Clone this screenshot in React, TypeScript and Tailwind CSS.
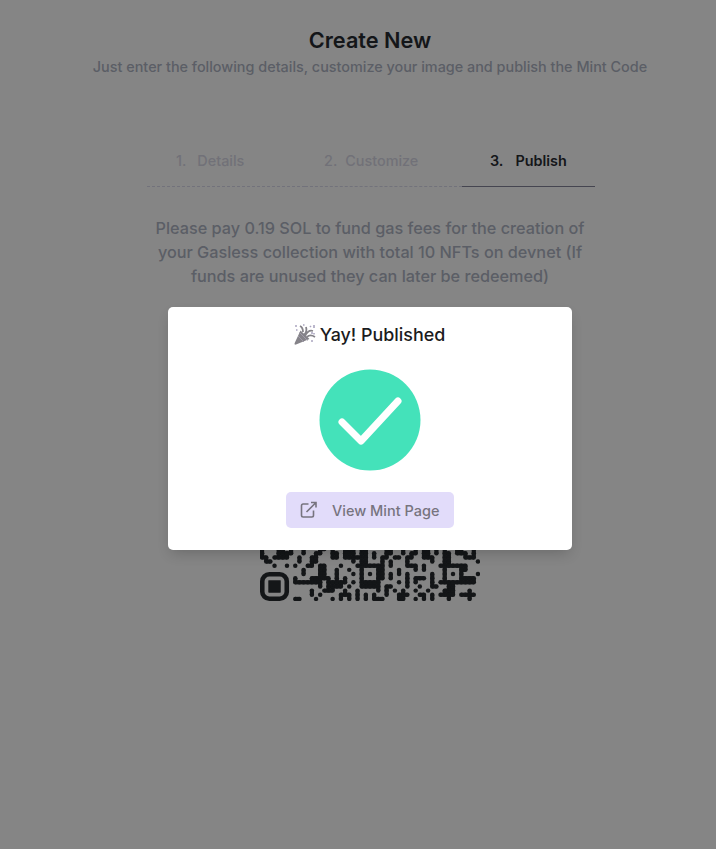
import React from "react";

// Lower rows of the QR symbol, top to bottom; each lists its dark columns.
const rows: number[][] = [
  [0, 4, 5, 7, 10, 14, 15, 17, 20, 21, 22, 24, 25, 30, 31, 34, 37, 39, 40, 42, 44, 47, 48, 51],
  [0, 4, 5, 6, 7, 10, 13, 14, 17, 18, 20, 21, 22, 24, 25, 27, 30, 31, 34, 36, 37, 39, 40, 42, 44, 45, 47, 48, 49, 51],
  [0, 1, 3, 4, 5, 6, 9, 12, 13, 17, 18, 20, 21, 22, 23, 24, 25, 27, 29, 30, 32, 33, 35, 36, 39, 40, 41, 44, 45, 49, 50, 51],
  [1, 2, 9, 12, 13, 22, 24, 25, 29, 31, 35, 41, 44, 45, 52],
  [3, 6, 8, 11, 12, 14, 15, 19, 23, 24, 25, 26, 27, 28, 29, 31, 35, 36, 37, 39, 43, 44, 45, 46, 47, 48, 49],
  [10, 14, 15, 18, 21, 24, 28, 29, 33, 37, 39, 44, 48, 49],
  [10, 14, 15, 18, 22, 24, 26, 28, 29, 31, 33, 35, 41, 44, 46, 48, 52],
  [8, 12, 13, 14, 15, 16, 18, 20, 24, 28, 29, 31, 35, 37, 38, 39, 41, 44, 48, 49, 50, 51],
  [8, 9, 10, 11, 12, 13, 14, 16, 17, 18, 19, 20, 22, 24, 25, 26, 27, 28, 33, 35, 37, 41, 43, 44, 45, 46, 47, 48, 49, 50, 51],
  [14, 16, 17, 18, 19, 21, 24, 25, 26, 27, 28, 30, 31, 35, 38, 41, 42, 45, 46],
  [12, 15, 16, 17, 20, 23, 28, 30, 32, 34, 37, 40, 44, 45, 46, 50],
  [12, 14, 19, 20, 21, 23, 25, 27, 30, 33, 34, 35, 38, 39, 41, 43, 44, 45, 46, 48, 49, 50, 51],
  [8, 9, 13, 17, 19, 21, 23, 25, 27, 28, 29, 33, 34, 37, 39, 41, 45, 50],
];

function QrCode() {
  const lit = (r: number, c: number) => !!rows[r] && rows[r].includes(c);
  return (
    <svg width="220" height="220" viewBox="0 0 53 53" fill="#141618" className="block">
      {rows.map((cols, r) =>
        cols.map((c) => (
          <g key={`${r}-${c}`} transform={`translate(${c} ${40 + r})`}>
            <circle cx=".5" cy=".5" r=".54" />
            {lit(r, c + 1) && <rect x=".5" width="1" height="1" />}
            {lit(r + 1, c) && <rect y=".5" width="1" height="1" />}
          </g>
        )),
      )}
      <rect x=".55" y="46.55" width="5.9" height="5.9" rx="1.7" fill="none" stroke="#141618" strokeWidth="1.1" />
      <rect x="2" y="48" width="3" height="3" rx=".15" />
    </svg>
  );
}

function PartyPopper() {
  return (
    <svg width="24" height="24" viewBox="0 0 24 24" fill="none" className="shrink-0">
      <path d="M7.5 7.5 16.5 16 3 21.5c-1.2.5-1.8-.2-1.3-1.4z" fill="#858389" />
      <path d="m5 13 6 6M6.5 9.5l8 8" stroke="#a09caa" strokeWidth="1" />
      <path d="M11 12c2-2 3-5 2-8M12 13c2-4 5-6 8-5M14 14c2-2 5-2 8 0M10 9c0-3-1-5-3-6" stroke="#858389" strokeWidth="1.8" />
      <path d="M2 3h2M3 7h1.5M10 2h1.5M17 3l1 1M21 2v3M18 10h2M21 10v1.5M18 18h2" stroke="#aaa5c0" strokeWidth="1.6" />
    </svg>
  );
}

const steps = [
  { label: "Details", box: "w-[158px] pl-[29px] gap-[11px]" },
  { label: "Customize", box: "w-[157px] pl-[19px] gap-[8px]" },
  { label: "Publish", box: "w-[133px] pl-[28px] gap-[12px]" },
];

export default function App() {
  return (
    <div className="relative h-[849px] w-[716px] overflow-hidden bg-[#858585] pl-6 font-['Inter',sans-serif]">
      <main className="flex flex-col items-center">
        <h1 className="mt-[26px] whitespace-nowrap text-[21.7px] leading-7 font-semibold text-[#141619]">Create New</h1>
        <p className="mt-[3px] whitespace-nowrap text-[14.4px] leading-5 font-medium text-[#5b5e66]">
          Just enter the following details, customize your image and publish the Mint Code
        </p>
        <ol className="mt-[73px] ml-[2px] flex h-[37px]">
          {steps.map((s, i) => (
            <li
              key={s.label}
              className={`flex border-b text-[14.4px] leading-[22px] whitespace-nowrap ${s.box} ${
                i === 2
                  ? "border-solid border-[#454550] font-semibold text-[#141619]"
                  : "border-dashed border-[#72727b] font-medium text-[#717178]"
              }`}
            >
              <span>{i + 1}.</span>
              <span>{s.label}</span>
            </li>
          ))}
        </ol>
        <p className="mt-[29px] text-center text-[16.24px] leading-6 font-medium whitespace-nowrap text-[#5b5e66]">
          Please pay 0.19 SOL to fund gas fees for the creation of
          <br />
          your Gasless collection with total 10 NFTs on devnet (If
          <br />
          funds are unused they can later be redeemed)
        </p>
        <div className="mt-[93px]">
          <QrCode />
        </div>
      </main>

      <div className="absolute top-[307px] left-[168px] flex h-[243px] w-[404px] flex-col items-center rounded-[5px] bg-white shadow-[0_6px_14px_-3px_rgba(0,0,0,0.2)]">
        <h2 className="mt-[14px] mr-[2px] flex h-7 items-center gap-[3px] text-[17.9px] leading-7 font-medium whitespace-nowrap text-[#1b1b20]">
          <PartyPopper />
          Yay! Published
        </h2>
        <svg width="102" height="102" viewBox="0 0 102 102" className="mt-5 shrink-0">
          <circle cx="51" cy="51" r="50.5" fill="#44e2ba" />
          <path d="m23 53 19 19 37-40" fill="none" stroke="#fff" strokeWidth="7" strokeLinecap="round" strokeLinejoin="round" />
        </svg>
        <button className="mt-[21px] flex h-9 w-[168px] items-center rounded-[5px] bg-[#e2dcfa] pt-px pl-[14px] text-[14.5px] font-medium whitespace-nowrap text-[#77747f]">
          <svg width="18" height="18" viewBox="0 0 18 18" fill="none" stroke="currentColor" strokeWidth="1.6" className="mr-[14px] -mt-[2px] shrink-0">
            <path d="M8.5 3H3.2Q1.5 3 1.5 4.7v9.6Q1.5 16 3.2 16h8.6q1.7 0 1.7-1.7V9.5M6.5 11 15.5 2M11 1.5h5v5" />
          </svg>
          View Mint Page
        </button>
      </div>
    </div>
  );
}
